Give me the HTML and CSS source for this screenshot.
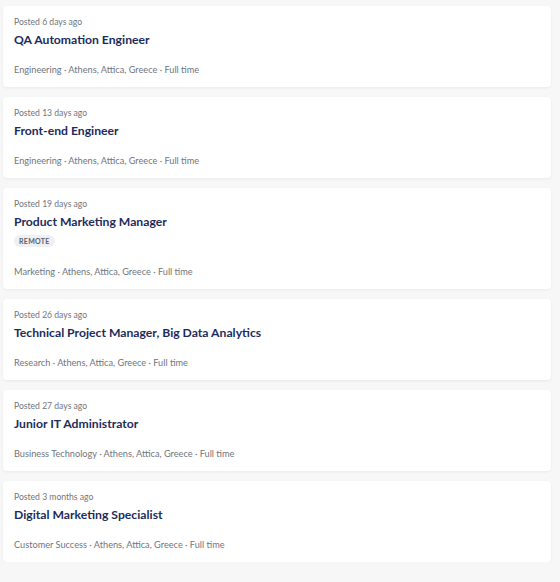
FILE: index.html
```html
<!DOCTYPE html>
<html>
    <head>
        <meta charset="utf-8">
        <title>Jobs</title>
        <link rel="stylesheet" href="styles.css">
    </head>
    <body>
        <div class="jobs">
            <div class="job">
                <div class="posted">Posted 6 days ago</div>
                <h3 class="title">QA Automation Engineer</h3>
                <div class="meta">Engineering · Athens, Attica, Greece · Full time</div>
            </div>
            <div class="job">
                <div class="posted">Posted 13 days ago</div>
                <h3 class="title">Front-end Engineer</h3>
                <div class="meta">Engineering · Athens, Attica, Greece · Full time</div>
            </div>
            <div class="job">
                <div class="posted">Posted 19 days ago</div>
                <h3 class="title">Product Marketing Manager</h3>
                <span class="badge">REMOTE</span>
                <div class="meta">Marketing · Athens, Attica, Greece · Full time</div>
            </div>
            <div class="job">
                <div class="posted">Posted 26 days ago</div>
                <h3 class="title">Technical Project Manager, Big Data Analytics</h3>
                <div class="meta">Research · Athens, Attica, Greece · Full time</div>
            </div>
            <div class="job">
                <div class="posted">Posted 27 days ago</div>
                <h3 class="title">Junior IT Administrator</h3>
                <div class="meta">Business Technology · Athens, Attica, Greece · Full time</div>
            </div>
            <div class="job">
                <div class="posted">Posted 3 months ago</div>
                <h3 class="title">Digital Marketing Specialist</h3>
                <div class="meta">Customer Success · Athens, Attica, Greece · Full time</div>
            </div>
        </div>
    </body>
</html>
```

FILE: styles.css
```css
*{
    margin: 0;
    padding: 0;
    box-sizing: border-box;
}
body{
    font-family: 'Lato', 'Noto Sans', sans-serif;
    background-color: #F7F7F7;
    color: #1D2B5B;
}
.jobs{
    display: flex;
    flex-direction: column;
    gap: 10px;
    padding: 6px 9px 0 3px;
}
.job{
    background-color: #fff;
    border-radius: 4px;
    box-shadow: 0 1px 3px rgba(0,0,0,.06);
    padding: 10px 11px 11px;
    display: flex;
    flex-direction: column;
    align-items: flex-start;
}
.posted{
    font-size: 8.6px;
    line-height: 12px;
    color: #6F7580;
}
.title{
    font-size: 12.2px;
    line-height: 18px;
    font-weight: bold;
    margin-top: 3px;
    color: #1D2B5B;
}
.badge{
    display: inline-block;
    margin-top: 4px;
    padding: 0 5px;
    height: 12px;
    line-height: 12px;
    border-radius: 6px;
    background-color: #EEF0F3;
    color: #59606B;
    font-size: 7px;
    font-weight: bold;
    letter-spacing: .3px;
}
.meta{
    margin-top: 15px;
    font-size: 9.2px;
    line-height: 12px;
    color: #6F7580;
}
.badge + .meta{
    margin-top: 19px;
}
```
